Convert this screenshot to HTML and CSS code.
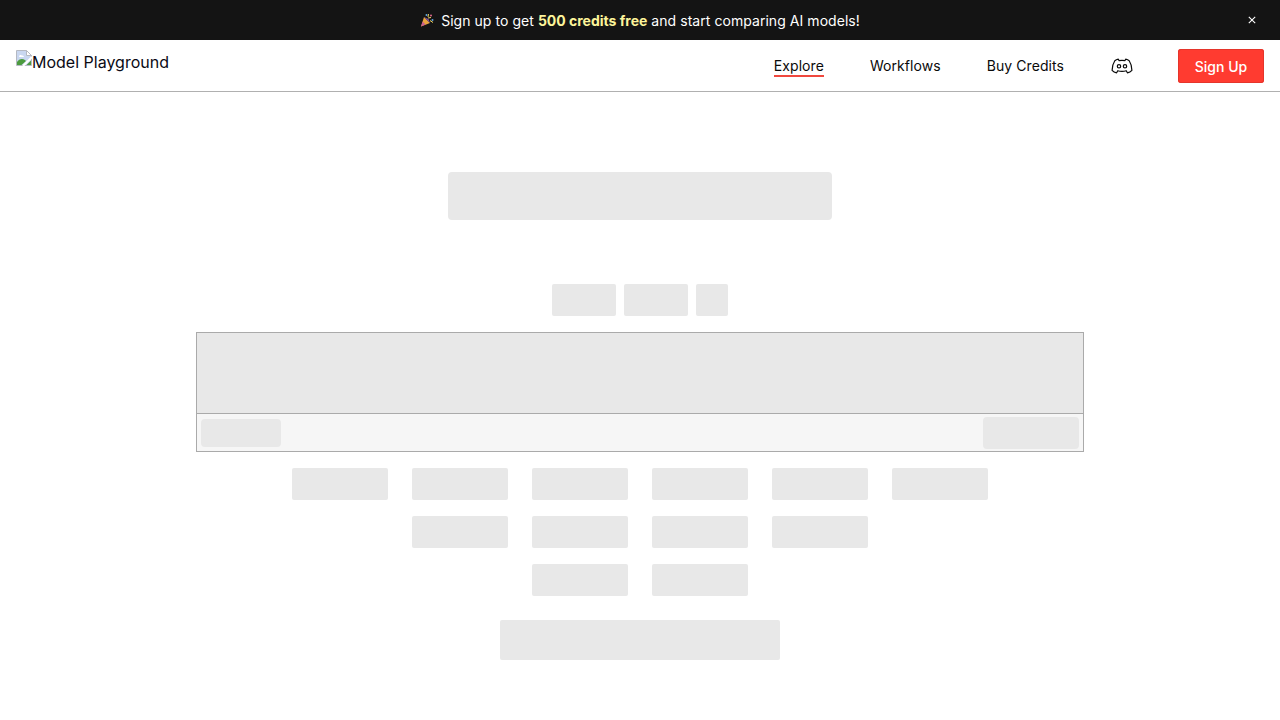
FILE: index.html
```html
<!DOCTYPE html>
<html lang="en">
<head>
<meta charset="utf-8">
<title>Model Playground</title>
<link rel="stylesheet" href="styles.css">
</head>
<body>
<div class="banner">
  <p class="banner-text">
    <svg class="popper" viewBox="0 0 14 14" width="14" height="14" aria-hidden="true">
      <path d="M1 13.500 L4 4 L10 10 Z" fill="#e8a33d"/>
      <path d="M1 13.500 L2.500 8.500 L5.500 11.500 Z" fill="#c75d8f"/>
      <path d="M4 4 L10 10 L8.500 6 Z" fill="#7a4fa3"/>
      <circle cx="6.500" cy="2" r="1" fill="#5aa7e0"/>
      <circle cx="11" cy="2.500" r="1" fill="#e06a8e"/>
      <circle cx="12.500" cy="7" r="1" fill="#5aa7e0"/>
      <path d="M8 5 L11 4.500 M8.500 1 L8 4 M10 7.500 L13 9.500" stroke="#f0d060" stroke-width="1"/>
    </svg>
    <span>Sign up to get <strong class="highlight">500 credits free</strong> and start comparing AI models!</span>
  </p>
  <button class="banner-close" type="button" aria-label="Close">
    <svg viewBox="0 0 8 8" width="8" height="8"><path d="M.8.8l6.400 6.400M7.200.8L.8 7.200" stroke="#fff" stroke-width="1.100" fill="none"/></svg>
  </button>
</div>
<header class="header">
  <a class="logo" href="#">
    <svg class="broken" viewBox="0 0 16 16" width="16" height="16" aria-hidden="true">
      <path d="M.5.5H10.500L15.500 5.500V15.500H.5Z" fill="#c9d7f0" stroke="#b5b9c2"/>
      <path d="M10.500 .5V5.500H15.500Z" fill="#fff" stroke="#b5b9c2"/>
      <path d="M1 15V12C3 9 6 8 9 10L10 11L5.500 15Z" fill="#4c9b3f"/>
      <path d="M10.500 15L15 10.500V15Z" fill="#4c9b3f"/>
      <path d="M16 7L7 16" stroke="#fff" stroke-width="2"/>
      <path d="M3 6.500C3 5 5 4.500 6 5.500C7.500 5 8.500 6.500 7.500 7H3.500Z" fill="#fff"/>
    </svg><span>Model Playground</span>
  </a>
  <nav class="nav">
    <a class="nav-link active" href="#">Explore</a>
    <a class="nav-link" href="#">Workflows</a>
    <a class="nav-link" href="#">Buy Credits</a>
    <a class="nav-icon" href="#" aria-label="Discord">
      <svg viewBox="0 0 22 16" width="22" height="16" fill="none" stroke="#0a0a0a" stroke-width="1.200" stroke-linejoin="round">
        <path d="M7.300 1.200C5.800 1.500 4.700 2 3.800 2.700C2 5.500 1 8.700 1.100 12.300C2.300 13.600 3.800 14.400 5.600 14.800L6.800 12.700C8.800 13.300 13.200 13.300 15.200 12.700L16.400 14.800C18.200 14.400 19.700 13.600 20.900 12.300C21 8.700 20 5.500 18.200 2.700C17.300 2 16.200 1.500 14.700 1.200L14 2.600C12 2.300 10 2.300 8 2.600Z"/>
        <circle cx="8" cy="8.300" r="1.700"/>
        <circle cx="14" cy="8.300" r="1.700"/>
      </svg>
    </a>
    <a class="signup" href="#">Sign Up</a>
  </nav>
</header>
<main class="main">
  <div class="sk sk-title"></div>
  <div class="tabs">
    <div class="sk sk-tab"></div>
    <div class="sk sk-tab"></div>
    <div class="sk sk-tab-small"></div>
  </div>
  <section class="prompt">
    <div class="prompt-input"></div>
    <div class="prompt-bar">
      <div class="sk sk-tool"></div>
      <div class="sk sk-send"></div>
    </div>
  </section>
  <div class="chips">
    <div class="chip-row">
      <div class="sk sk-chip"></div><div class="sk sk-chip"></div><div class="sk sk-chip"></div>
      <div class="sk sk-chip"></div><div class="sk sk-chip"></div><div class="sk sk-chip"></div>
    </div>
    <div class="chip-row">
      <div class="sk sk-chip"></div><div class="sk sk-chip"></div><div class="sk sk-chip"></div><div class="sk sk-chip"></div>
    </div>
    <div class="chip-row">
      <div class="sk sk-chip"></div><div class="sk sk-chip"></div>
    </div>
  </div>
  <div class="sk sk-cta"></div>
</main>
</body>
</html>
```
FILE: styles.css
```css
* { box-sizing: border-box; }
html, body { margin: 0; padding: 0; }
body {
  font-family: Inter, "Liberation Sans", sans-serif;
  background: #fff;
  color: #141414;
  height: 720px;
  overflow: hidden;
}
a { color: inherit; text-decoration: none; }

.banner {
  display: flex;
  align-items: center;
  justify-content: center;
  height: 40px;
  background: #141414;
  color: #fff;
  font-size: 14px;
  font-weight: 400;
  letter-spacing: .05px;
  position: relative;
}
.banner-text { display: flex; align-items: center; gap: 7px; margin: 0; }
.popper { display: block; }
.highlight { color: #fdf49a; font-weight: 700; letter-spacing: 0; }
.banner-close {
  position: absolute;
  right: 24px;
  top: 16px;
  display: block;
  width: 8px;
  height: 8px;
  padding: 0;
  border: 0;
  background: none;
  line-height: 0;
}

.header {
  display: flex;
  justify-content: space-between;
  height: 52px;
  padding: 9px 16px 8px;
  border-bottom: 1px solid #b0b0b0;
}
.logo { display: flex; align-items: flex-start; padding-top: 1px; font-size: 16px; line-height: 24px; color: #0a0a14; }
.broken { display: block; flex: none; }
.nav { display: flex; align-items: center; gap: 46px; font-size: 14px; font-weight: 400; letter-spacing: .07px; color: #0a0a0a; }
.nav-link { line-height: 20px; position: relative; }
.nav-link.active::after {
  content: "";
  position: absolute;
  left: 0;
  right: 0;
  bottom: -1px;
  height: 2px;
  background: #f0483e;
}
.nav-icon { display: block; height: 16px; line-height: 0; margin-left: 1px; margin-right: -1px; }
.signup {
  display: flex;
  align-items: center;
  justify-content: center;
  width: 86px;
  height: 34px;
  background: #ff3b30;
  color: #fff;
  border-radius: 3px;
  box-shadow: inset 0 0 0 1px #e5352b;
  font-size: 14px;
  font-weight: 500;
  letter-spacing: 0;
}

.main { display: flex; flex-direction: column; align-items: center; padding-top: 80px; }
.sk { background: #e8e8e8; border-radius: 2px; }
.sk-title { width: 384px; height: 48px; border-radius: 4px; }
.tabs { display: flex; gap: 8px; margin-top: 64px; }
.sk-tab { width: 64px; height: 32px; }
.sk-tab-small { width: 32px; height: 32px; }
.prompt { width: 888px; height: 120px; margin-top: 16px; border: 1px solid #aaa; display: flex; flex-direction: column; }
.prompt-input { height: 81px; background: #e8e8e8; border-bottom: 1px solid #aaa; }
.prompt-bar { flex: 1; display: flex; justify-content: space-between; align-items: center; padding: 0 4px; background: #f6f6f6; }
.sk-tool { width: 80px; height: 28px; border-radius: 4px; }
.sk-send { width: 96px; height: 32px; border-radius: 4px; }
.chips { display: flex; flex-direction: column; gap: 16px; margin-top: 16px; }
.chip-row { display: flex; justify-content: center; gap: 24px; }
.sk-chip { width: 96px; height: 32px; }
.sk-cta { width: 280px; height: 40px; margin-top: 24px; }
```
